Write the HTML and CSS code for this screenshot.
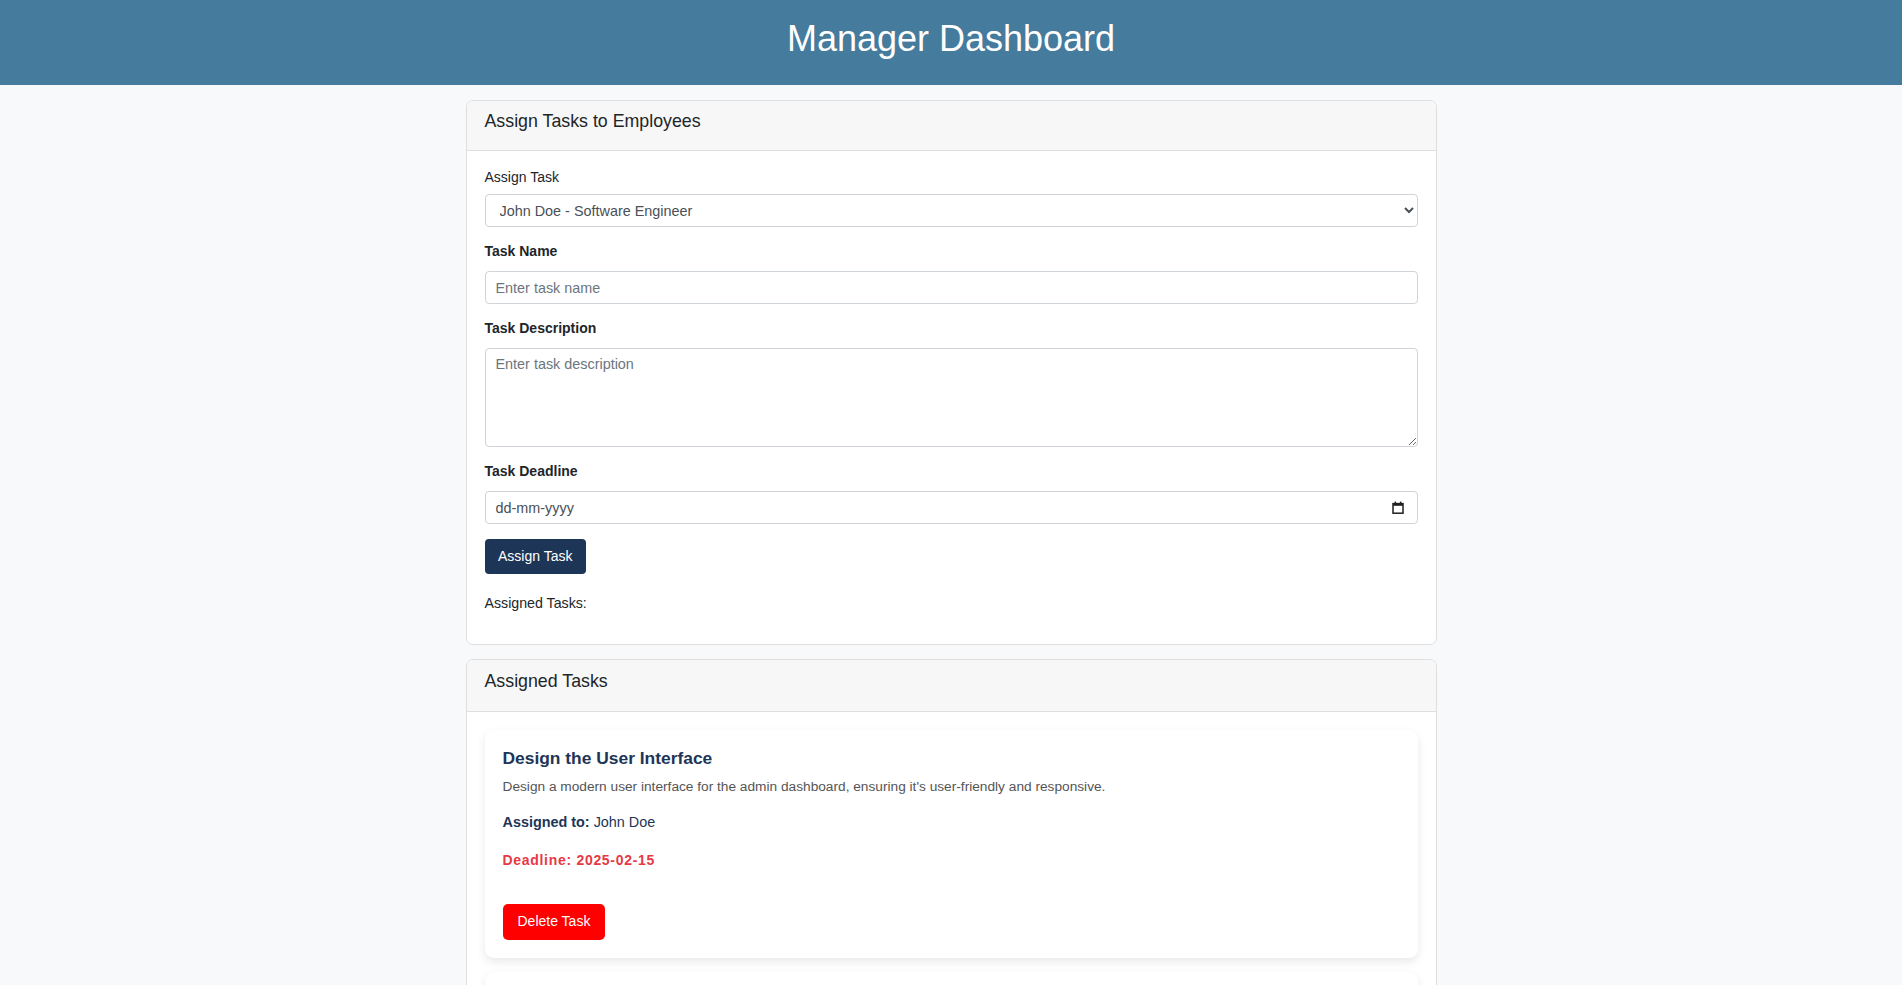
FILE: index.html
```html
<!DOCTYPE html>
<html lang="en">
<head>
<meta charset="utf-8">
<title>Manager Dashboard</title>
<link rel="stylesheet" href="styles.css">
</head>
<body>
<header class="topbar">
  <h1 class="topbar-title">Manager Dashboard</h1>
</header>
<main class="container">
  <section class="card">
    <div class="card-header">Assign Tasks to Employees</div>
    <div class="card-body">
      <form class="task-form">
        <div class="field">
          <label class="label-plain" for="emp">Assign Task</label>
          <select id="emp" class="control">
            <option>John Doe - Software Engineer</option>
            <option>Jane Smith - Product Manager</option>
          </select>
        </div>
        <div class="field">
          <label class="label-bold" for="tname">Task Name</label>
          <input id="tname" class="control" type="text" placeholder="Enter task name">
        </div>
        <div class="field">
          <label class="label-bold" for="tdesc">Task Description</label>
          <textarea id="tdesc" class="control control-area" placeholder="Enter task description"></textarea>
        </div>
        <div class="field">
          <label class="label-bold" for="tdate">Task Deadline</label>
          <div class="date-wrap">
            <input id="tdate" class="control control-date" type="text" placeholder="dd-mm-yyyy">
            <svg class="cal-icon" width="12" height="13" viewBox="0 0 12 13" aria-hidden="true">
              <rect x="1" y="2.6" width="10" height="9.6" fill="none" stroke="#1f1f1f" stroke-width="1.5"/>
              <rect x="1" y="2.6" width="10" height="2.2" fill="#1f1f1f"/>
              <rect x="2.6" y="0.6" width="1.5" height="2.4" fill="#1f1f1f"/>
              <rect x="7.9" y="0.6" width="1.5" height="2.4" fill="#1f1f1f"/>
            </svg>
          </div>
        </div>
        <button type="button" class="btn-primary">Assign Task</button>
      </form>
      <div class="assigned-note">Assigned Tasks:</div>
    </div>
  </section>

  <section class="card">
    <div class="card-header card-header-alt">Assigned Tasks</div>
    <div class="card-body card-body-list">
      <article class="task">
        <h3 class="task-title">Design the User Interface</h3>
        <p class="task-desc">Design a modern user interface for the admin dashboard, ensuring it's user-friendly and responsive.</p>
        <p class="task-assignee"><strong>Assigned to:</strong> John Doe</p>
        <p class="task-deadline">Deadline: 2025-02-15</p>
        <button type="button" class="btn-delete">Delete Task</button>
      </article>
      <article class="task">
        <h3 class="task-title">Develop Backend API</h3>
        <p class="task-desc">Build the REST endpoints for task management and employee records.</p>
        <p class="task-assignee"><strong>Assigned to:</strong> Jane Smith</p>
        <p class="task-deadline">Deadline: 2025-03-01</p>
        <button type="button" class="btn-delete">Delete Task</button>
      </article>
    </div>
  </section>
</main>
</body>
</html>
```

FILE: styles.css
```css
* {
  box-sizing: border-box;
}

body {
  margin: 0;
  background: #f8f9fa;
  font-family: "Liberation Sans", Arial, Helvetica, sans-serif;
  color: #212529;
  font-size: 14px;
  line-height: 21px;
}

.topbar {
  background: #457b9d;
  color: #ffffff;
  text-align: center;
  padding: 17px 0 25px;
}

.topbar-title {
  margin: 0;
  font-size: 36px;
  line-height: 43px;
  font-weight: normal;
}

.container {
  width: 971px;
  margin: 15px auto 0;
}

.card {
  background: #ffffff;
  border: 1px solid #dfdfdf;
  border-radius: 7px;
  margin-bottom: 14.5px;
  overflow: hidden;
}

.card-header {
  background: #f7f7f7;
  border-bottom: 1px solid #dfdfdf;
  padding: 7px 18px 15.6px;
  font-size: 17.8px;
  line-height: 26.4px;
  color: #212529;
}

.card-header-alt {
  padding-top: 8.3px;
  padding-bottom: 16.3px;
}

.card-body {
  padding: 16px 18px 17.5px;
}

.card-body-list {
  padding-top: 17.4px;
  padding-bottom: 4px;
}

.field {
  margin-bottom: 14px;
}

.label-plain {
  display: block;
  margin-bottom: 6px;
}

.label-bold {
  display: block;
  font-weight: bold;
  color: #212529;
  margin-bottom: 9px;
}

.control {
  display: block;
  width: 100%;
  height: 33px;
  padding: 0 10px;
  border: 1px solid #ced4da;
  border-radius: 4px;
  background-color: #ffffff;
  font-family: "Liberation Sans", Arial, Helvetica, sans-serif;
  font-size: 14.4px;
  color: #495057;
}

.control::placeholder {
  color: #6c757d;
}

.control-area {
  height: 99px;
  padding: 5px 10px;
  line-height: 21.6px;
  resize: vertical;
}

.date-wrap {
  position: relative;
}

.control-date::placeholder {
  color: #495057;
}

.cal-icon {
  position: absolute;
  right: 14px;
  top: 10px;
}

.btn-primary {
  display: inline-block;
  margin-top: 1px;
  background: #1d3557;
  color: #ffffff;
  border: none;
  border-radius: 4px;
  padding: 6.85px 13.5px;
  font-family: "Liberation Sans", Arial, Helvetica, sans-serif;
  font-size: 14px;
  line-height: 21px;
  cursor: pointer;
}

.assigned-note {
  margin-top: 19px;
  margin-bottom: 12.5px;
  font-size: 14.2px;
}

.task {
  background: #ffffff;
  border-radius: 9px;
  box-shadow: 0 4px 10px rgba(0, 0, 0, 0.09);
  padding: 18px 18px 18px;
  margin-bottom: 14.5px;
}

.task-title {
  margin: 0 0 8.4px;
  font-size: 17.4px;
  line-height: 20.8px;
  font-weight: bold;
  color: #1d3557;
}

.task-desc {
  margin: 0 0 15.3px;
  font-size: 13.7px;
  line-height: 20.4px;
  color: #555555;
}

.task-assignee {
  margin: 0 0 15.5px;
  font-size: 14.4px;
  line-height: 21.6px;
  color: #1d3557;
}

.task-deadline {
  margin: 0 0 33.3px;
  font-size: 14px;
  line-height: 21px;
  font-weight: bold;
  letter-spacing: 0.7px;
  color: #e63946;
}

.btn-delete {
  display: inline-block;
  background: #ff0000;
  color: #ffffff;
  border: none;
  border-radius: 5px;
  padding: 7.35px 15px;
  font-family: "Liberation Sans", Arial, Helvetica, sans-serif;
  font-size: 14px;
  line-height: 21px;
  cursor: pointer;
}
```
